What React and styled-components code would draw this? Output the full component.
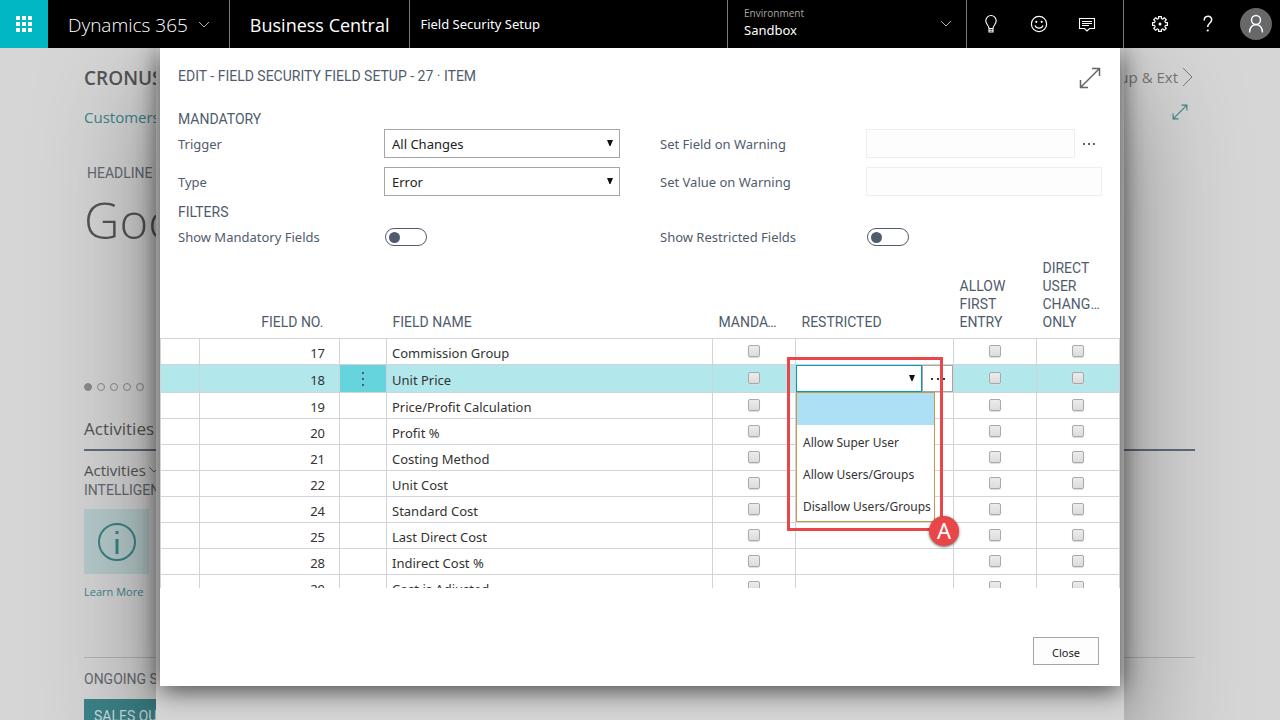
import { useState } from 'react'
import styled, { createGlobalStyle } from 'styled-components'

const GlobalStyle = createGlobalStyle`
    * {
        box-sizing: border-box;
    }
    body {
        margin: 0;
        background-color: #d6d6d6;
        font-family: 'Noto Sans', 'Open Sans', sans-serif;
        font-size: 13px;
        color: #333333;
        overflow: hidden;
    }
    button, select, input {
        font-family: inherit;
        margin: 0;
    }
`

const ui = {
    slate: '#505c6d',
    teal: '#00b7c3',
    line: '#d1d3da',
    border: '#a6a6a6',
    red: '#e94649',
}

/* top bar */

const TopBar = styled.header`
    display: flex;
    height: 48px;
    background-color: #000000;
    color: #ffffff;
`

const Waffle = styled.button`
    width: 48px;
    padding: 0;
    border: 0;
    background-color: ${ui.teal};
    display: flex;
    align-items: center;
    justify-content: center;
`

const Product = styled.button`
    display: flex;
    align-items: center;
    gap: 11px;
    padding: 2px 20px 0;
    border: 0;
    border-right: 1px solid #7a7a7a;
    background: none;
    color: #ffffff;
    font-family: 'Open Sans', sans-serif;
    font-size: ${props => props.$light ? 19 : 18}px;
    line-height: 26px;
    font-weight: ${props => props.$light ? 300 : 400};
    white-space: nowrap;
`

const PageName = styled.div`
    flex: 1;
    min-width: 0;
    padding: 0 10px;
    line-height: 48px;
`

const Environment = styled.button`
    width: 239px;
    padding: 0 15px 0 16px;
    border: 0;
    border-left: 1px solid #7a7a7a;
    background: none;
    color: #ffffff;
    display: flex;
    align-items: center;
    justify-content: space-between;
    text-align: left;
    font-size: 13px;
    line-height: 17px;
`

const EnvironmentText = styled.span`
    padding-bottom: 4px;
`

const EnvironmentLabel = styled.small`
    display: block;
    font-family: 'Open Sans', sans-serif;
    font-size: 10px;
    color: #a8a8a8;
`

const BarIcons = styled.nav`
    display: flex;
    border-left: 1px solid #7a7a7a;
    padding: ${props => props.$last ? '0 0 0 12px' : '0 12px 0 0'};
`

const BarButton = styled.button`
    width: 48px;
    padding: 0;
    border: 0;
    background: none;
    color: #ffffff;
    display: flex;
    align-items: center;
    justify-content: center;
`

/* role center behind the dialog */

const RoleCenter = styled.main`
    padding: 16px 85px 0 84px;
    color: #555555;
    font-family: 'Open Sans', sans-serif;
    height: calc(100vh - 48px);
    overflow: hidden;
`

const CenterTop = styled.div`
    display: flex;
    align-items: center;
    justify-content: space-between;
    height: 28px;
`

const Company = styled.h1`
    margin: 0;
    font-size: 19px;
    line-height: 28px;
    font-weight: 600;
`

const NavLink = styled.a`
    display: flex;
    align-items: center;
    gap: 4px;
    padding: 0 1px 2px 0;
    font-size: 15px;
    color: #777777;
    text-decoration: none;
`

const CenterLinks = styled.div`
    display: flex;
    justify-content: space-between;
    align-items: flex-start;
    height: 26px;
    margin-top: 12px;
    padding-right: 7px;
`

const TealLink = styled.a`
    display: block;
    color: #3c8488;
    text-decoration: none;
    font-size: ${props => props.$small ? 11 : 15}px;
    line-height: ${props => props.$small ? 20 : 26}px;
`

const Caption = styled.h3`
    margin: 0;
    font-family: Roboto, sans-serif;
    font-weight: 400;
    font-size: 14px;
    line-height: 18px;
    color: #646a73;
`

const Headline = styled.section`
    height: 253px;
    padding-top: 34px;
`

const HeadlineCaption = styled(Caption)`
    padding-left: 3px;
`

const Greeting = styled.p`
    margin: 6px 0 0;
    font-size: 49px;
    line-height: 64px;
    font-weight: 300;
`

const Dots = styled.div`
    display: flex;
    gap: 5px;
`

const Dot = styled.span`
    width: 8px;
    height: 8px;
    border-radius: 50%;
    border: 1px solid #8c8c8c;
    background-color: ${props => props.$on ? '#8c8c8c' : 'transparent'};
`

const SectionTitle = styled.h2`
    margin: 24px 0 8px;
    padding-bottom: 6px;
    border-bottom: 2px solid #636c78;
    font-size: 17px;
    line-height: 28px;
    font-weight: 400;
`

const SubTitle = styled.p`
    display: flex;
    align-items: center;
    gap: 3px;
    margin: 0;
    font-size: 15px;
    line-height: 22px;
`

const InfoTile = styled.div`
    width: 65px;
    height: 65px;
    margin: 10px 0 8px;
    background-color: #b8cccd;
    display: flex;
    align-items: center;
    justify-content: center;
`

const Ongoing = styled.section`
    margin-top: 55px;
    padding-top: 12px;
    border-top: 1px solid #b4b4b4;
`

const SalesTile = styled.div`
    width: 140px;
    height: 120px;
    margin-top: 11px;
    padding: 8px 10px;
    background-color: #3c8488;
    font-family: Roboto, sans-serif;
    font-size: 14px;
    line-height: 18px;
    color: #d0dfe0;
`

/* stacked sheets, these lie over the role center */

const Sheet = styled.div`
    position: absolute;
    top: 48px;
    bottom: 0;
    left: 156px;
    right: 156px;
    background-color: #d5d5d5;
    box-shadow: 0 40px 110px rgba(0, 0, 0, 0.4);
    clip-path: inset(0 -156px 0 -156px);
`

const Dialog = styled.section`
    position: absolute;
    top: 0;
    left: 4px;
    right: 4px;
    background-color: #ffffff;
    box-shadow: 0 4px 25px rgba(0, 0, 0, 0.7);
`

const DialogHead = styled.header`
    display: flex;
    justify-content: space-between;
    align-items: flex-start;
    padding: 19px 19px 0 18px;
    height: 62px;
`

const DialogTitle = styled.h2`
    margin: 0;
    font-family: Roboto, sans-serif;
    font-size: 14px;
    line-height: 18px;
    font-weight: 400;
    color: ${ui.slate};
`

const IconButton = styled.button`
    padding: 0;
    border: 0;
    background: none;
    color: #666666;
    display: flex;
`

const GroupTitle = styled(DialogTitle)`
    padding: 0 18px;
`

const Fields = styled.div`
    display: grid;
    grid-template-columns: repeat(2, minmax(0, 1fr));
    column-gap: 40px;
    row-gap: 9px;
    padding: ${props => props.$flat ? '6px 18px 12px' : '1px 18px 7px'};
`

const Field = styled.div`
    display: flex;
    align-items: center;
    height: ${props => props.$flat ? 20 : 29}px;
`

const FieldLabel = styled.label`
    width: 206px;
    flex: none;
    font-size: 13px;
    line-height: 18px;
    color: ${ui.slate};
`

const SelectBox = styled.div`
    flex: 1;
    min-width: 0;
    display: grid;
    align-items: center;

    > * {
        grid-area: 1 / 1;
    }
    > svg {
        justify-self: end;
        margin: 0 7px 2px 0;
        pointer-events: none;
    }
`

const Select = styled.select`
    appearance: none;
    width: 100%;
    height: ${props => props.$active ? 27 : 29}px;
    padding: 0 7px;
    border: 1px solid ${props => props.$active ? '#00a0ab' : ui.border};
    border-radius: 0;
    background-color: #ffffff;
    color: #212121;
    font-size: 13px;
    outline: 0;
`

const TextInput = styled.input`
    flex: 1;
    min-width: 0;
    height: 29px;
    border: 1px solid #eeeeee;
    background-color: #fdfdfd;
    padding: 0 8px;
`

const MoreButton = styled(IconButton)`
    width: 27px;
    height: 29px;
    align-items: center;
    justify-content: center;
    color: #666666;
`

const Toggle = styled.input`
    appearance: none;
    width: 42px;
    height: 18px;
    margin-left: 1px;
    border: 1px solid ${ui.slate};
    border-radius: 9px;
    display: flex;
    align-items: center;
    padding: 0 3px;

    &::before {
        content: '';
        width: 11px;
        height: 11px;
        border-radius: 50%;
        background-color: ${ui.slate};
    }
    &:checked {
        justify-content: flex-end;
    }
`

/* field list */

const ListArea = styled.div`
    height: 329px;
    overflow: hidden;
`

const Table = styled.table`
    width: 100%;
    table-layout: fixed;
    border-collapse: collapse;
`

const Th = styled.th`
    padding: 0 ${props => props.$right ? 16 : 17}px 7px 6px;
    vertical-align: bottom;
    text-align: ${props => props.$right ? 'right' : 'left'};
    font-family: Roboto, sans-serif;
    font-size: 14px;
    line-height: 18px;
    font-weight: 400;
    color: ${ui.slate};
    overflow: hidden;
    text-overflow: ellipsis;
`

const Row = styled.tr`
    height: ${props => props.$selected ? 28 : 26}px;
    background-color: ${props => props.$selected ? '#b2e8ec' : '#ffffff'};
`

const Td = styled.td`
    padding: ${props => props.$editor ? '0' : '3px 5px 0'};
    border: 1px solid ${ui.line};
    text-align: ${props => props.$align || 'left'};
    line-height: 20px;
    white-space: nowrap;
`

const NumberTd = styled(Td)`
    padding-right: 14px;
`

const MenuTd = styled(Td)`
    padding: 0;
    background-color: ${props => props.$on ? '#66d4dd' : 'transparent'};
`

const RowMenu = styled(IconButton)`
    width: 100%;
    height: 27px;
    align-items: center;
    justify-content: center;
    color: ${ui.slate};
`

const Check = styled.input`
    appearance: none;
    display: block;
    width: 12px;
    height: 12px;
    margin: 0 auto 5px;
    border: 1px solid #a9a9a9;
    border-radius: 2px;
    background: linear-gradient(#ececec, #dcdcdc);
    box-shadow: 0 1px 1px #dddddd;
`

const Editor = styled.div`
    position: relative;
    display: flex;
    height: 27px;
`

const Assist = styled.button`
    width: 31px;
    padding: 0;
    border: 1px solid ${ui.border};
    background-color: #ffffff;
    color: #333333;
    display: flex;
    align-items: center;
    justify-content: center;
`

const Options = styled.ul`
    position: absolute;
    z-index: 1;
    top: 27px;
    left: 0;
    width: 139px;
    margin: 0;
    padding: 0;
    list-style: none;
    border: 1px solid #c19c4a;
    background-color: #ffffff;
`

const Option = styled.li`
    height: 32px;
    padding: 2px 6px 0;
    font-size: 12px;
    line-height: 32px;
    color: #333333;
    background-color: ${props => props.$on ? '#addff5' : '#ffffff'};
`

const Marker = styled.div`
    position: absolute;
    z-index: 2;
    top: -8px;
    left: -9px;
    width: 156px;
    height: 174px;
    border: 3px solid ${ui.red};
    pointer-events: none;
`

const MarkerBadge = styled.span`
    position: absolute;
    right: -19px;
    bottom: -18px;
    width: 30px;
    height: 30px;
    border-radius: 50%;
    background-color: ${ui.red};
    box-shadow: 0 1px 3px rgba(0, 0, 0, 0.6);
    color: #ffffff;
    font-size: 22px;
    line-height: 29px;
    text-align: center;
`

const DialogFoot = styled.footer`
    display: flex;
    justify-content: flex-end;
    padding: 49px 21px 21px;
`

const CloseButton = styled.button`
    width: 66px;
    height: 28px;
    padding: 2px 0 0;
    border: 1px solid ${ui.border};
    background-color: #fdfdfd;
    font-size: 11px;
    color: #212121;
`

/* icons */

const Chevron = ({ color = '#b5b5b5' }) => (
    <svg width="10" height="10" viewBox="0 0 10 10" fill="none" stroke={color}>
        <path d="M0 2l5 5 5-5" />
    </svg>
)

const Triangle = () => (
    <svg width="6" height="6" viewBox="0 0 6 6" fill="#111111">
        <path d="M0 0h6L3.500 6h-1z" />
    </svg>
)

const Expand = ({ size, color = 'currentColor' }) => (
    <svg width={size} height={size} viewBox="0 0 22 22" fill="none" stroke={color} strokeWidth="1.5">
        <path d="M1.5 20.5l19-19M13 1.500h7.500V9M1.500 13v7.500H9" />
    </svg>
)

const MoreDots = ({ step = 5 }) => (
    <svg width={step * 2 + 2} height="2" fill="currentColor">
        {[0, 1, 2].map(i => <rect key={i} x={i * step} width="2" height="2" />)}
    </svg>
)

const MenuDots = () => (
    <svg width="2" height="14" fill="currentColor">
        {[0, 6, 12].map(y => <rect key={y} y={y} width="2" height="2" />)}
    </svg>
)

const WaffleIcon = () => (
    <svg width="16" height="16" viewBox="0 0 16 16" fill="#ffffff">
        {[0, 6, 12].map(y => [0, 6, 12].map(x => (
            <rect key={`${x}-${y}`} x={x} y={y} width="4" height="4" />
        )))}
    </svg>
)

const BulbIcon = () => (
    <svg width="20" height="20" viewBox="0 0 20 20" fill="none" stroke="#ffffff" strokeWidth="1.100">
        <path d="M8 14.500c0-3-3.200-4.200-3.200-7.800a5.200 5.200 0 0 1 10.400 0c0 3.600-3.200 4.800-3.200 7.800zM8 14.500v3.500h4v-3.500M8 16.300h4" />
    </svg>
)

const SmileIcon = () => (
    <svg width="18" height="18" viewBox="0 0 18 18" fill="none" stroke="#ffffff" strokeWidth="1.200">
        <circle cx="9" cy="9" r="7.600" />
        <path d="M5 10.500c1.300 3.500 6.700 3.500 8 0" />
        <circle cx="6.300" cy="6.800" r="1.100" fill="#ffffff" stroke="none" />
        <circle cx="11.700" cy="6.800" r="1.100" fill="#ffffff" stroke="none" />
    </svg>
)

const ChatIcon = () => (
    <svg width="18" height="18" viewBox="0 0 18 18" fill="none" stroke="#ffffff" strokeWidth="1.100">
        <path d="M1.500 3.500h15v10h-5L9 16l-2.500-2.500h-5zM4 6.500h10M4 8.500h10M4 10.500h7" />
    </svg>
)

// eight teeth, four points each
const gearPoints = Array.from({ length: 32 }, (_, i) => {
    const tooth = Math.floor(i / 4)
    const [turn, radius] = [[-14, 5.6], [-11, 7.6], [11, 7.6], [14, 5.6]][i % 4]
    const angle = (tooth * 45 + turn) * Math.PI / 180
    return `${9 + radius * Math.cos(angle)},${9 + radius * Math.sin(angle)}`
}).join(' ')

const GearIcon = () => (
    <svg width="18" height="18" viewBox="0 0 18 18" fill="none" stroke="#ffffff" strokeWidth="1.200">
        <polygon points={gearPoints} strokeLinejoin="round" />
        <circle cx="9" cy="9" r="1.500" fill="#ffffff" stroke="none" />
    </svg>
)

const HelpIcon = () => (
    <svg width="18" height="18" viewBox="0 0 18 18" fill="none" stroke="#ffffff" strokeWidth="1.500">
        <path d="M5.200 5.500C5.200 0 12.700 0 12.700 4.800c0 3.200-4 3.400-4 7.200" />
        <circle cx="8.700" cy="15.500" r="1.100" fill="#ffffff" stroke="none" />
    </svg>
)

const PersonIcon = () => (
    <svg width="32" height="32" viewBox="0 0 32 32" fill="none" stroke="#ffffff" strokeWidth="1.400">
        <circle cx="16" cy="16" r="16" fill="#67686a" stroke="none" />
        <circle cx="16" cy="12" r="4.500" />
        <path d="M9.500 24.500c0-10.500 13-10.500 13 0" />
    </svg>
)

const InfoIcon = () => (
    <svg width="38" height="38" viewBox="0 0 38 38" fill="none" stroke="#3c8488" strokeWidth="2">
        <circle cx="19" cy="19" r="18" />
        <path d="M19 16v15M19 8v3" strokeWidth="3" />
    </svg>
)

const rows = [
    [17, 'Commission Group'],
    [18, 'Unit Price'],
    [19, 'Price/Profit Calculation'],
    [20, 'Profit %'],
    [21, 'Costing Method'],
    [22, 'Unit Cost'],
    [24, 'Standard Cost'],
    [25, 'Last Direct Cost'],
    [28, 'Indirect Cost %'],
    [29, 'Cost is Adjusted'],
]

const options = ['', 'Allow Super User', 'Allow Users/Groups', 'Disallow Users/Groups']

function RestrictedEditor() {
    const [value, setValue] = useState('')
    return (
        <Editor>
            <SelectBox>
                <Select
                    $active
                    aria-label="Restricted"
                    value={value}
                    onChange={e => setValue(e.target.value)}
                >
                    {options.map(option => <option key={option}>{option}</option>)}
                </Select>
                <Triangle />
            </SelectBox>
            <Assist aria-label="Choose groups"><MoreDots step={6} /></Assist>
            <Options>
                {options.map(option => (
                    <Option key={option} $on={option === value} onClick={() => setValue(option)}>
                        {option}
                    </Option>
                ))}
            </Options>
            <Marker><MarkerBadge>A</MarkerBadge></Marker>
        </Editor>
    )
}

function FieldRow({ no, name, selected }) {
    return (
        <Row $selected={selected}>
            <Td />
            <NumberTd $align="right">{no}</NumberTd>
            <MenuTd $on={selected}>
                {selected && <RowMenu aria-label="Row menu"><MenuDots /></RowMenu>}
            </MenuTd>
            <Td>{name}</Td>
            <Td><Check type="checkbox" aria-label={`Mandatory ${no}`} /></Td>
            <Td $editor={selected}>{selected && <RestrictedEditor />}</Td>
            <Td><Check type="checkbox" aria-label={`Allow first entry ${no}`} /></Td>
            <Td><Check type="checkbox" aria-label={`Direct user change only ${no}`} /></Td>
        </Row>
    )
}

function FieldList() {
    return (
        <ListArea>
            <Table>
                <colgroup>
                    <col width="39" />
                    <col width="140" />
                    <col width="47" />
                    <col />
                    <col width="83" />
                    <col width="158" />
                    <col width="83" />
                    <col width="83" />
                </colgroup>
                <thead>
                    <tr>
                        <Th />
                        <Th $right>FIELD NO.</Th>
                        <Th />
                        <Th>FIELD NAME</Th>
                        <Th>MANDATORY</Th>
                        <Th>RESTRICTED</Th>
                        <Th>ALLOW FIRST ENTRY</Th>
                        <Th>DIRECT USER CHANGES ONLY</Th>
                    </tr>
                </thead>
                <tbody>
                    {rows.map(([no, name]) => (
                        <FieldRow key={no} no={no} name={name} selected={no === 18} />
                    ))}
                </tbody>
            </Table>
        </ListArea>
    )
}

function SetupDialog() {
    const [trigger, setTrigger] = useState('All Changes')
    const [type, setType] = useState('Error')
    return (
        <Dialog>
            <DialogHead>
                <DialogTitle>EDIT - FIELD SECURITY FIELD SETUP - 27 · ITEM</DialogTitle>
                <IconButton aria-label="Expand"><Expand size={22} /></IconButton>
            </DialogHead>
            <GroupTitle>MANDATORY</GroupTitle>
            <Fields>
                <Field>
                    <FieldLabel htmlFor="trigger">Trigger</FieldLabel>
                    <SelectBox>
                        <Select id="trigger" value={trigger} onChange={e => setTrigger(e.target.value)}>
                            <option>All Changes</option>
                        </Select>
                        <Triangle />
                    </SelectBox>
                </Field>
                <Field>
                    <FieldLabel htmlFor="warn-field">Set Field on Warning</FieldLabel>
                    <TextInput id="warn-field" disabled />
                    <MoreButton aria-label="Choose field"><MoreDots /></MoreButton>
                </Field>
                <Field>
                    <FieldLabel htmlFor="type">Type</FieldLabel>
                    <SelectBox>
                        <Select id="type" value={type} onChange={e => setType(e.target.value)}>
                            <option>Error</option>
                        </Select>
                        <Triangle />
                    </SelectBox>
                </Field>
                <Field>
                    <FieldLabel htmlFor="warn-value">Set Value on Warning</FieldLabel>
                    <TextInput id="warn-value" disabled />
                </Field>
            </Fields>
            <GroupTitle>FILTERS</GroupTitle>
            <Fields $flat>
                <Field $flat>
                    <FieldLabel htmlFor="show-mandatory">Show Mandatory Fields</FieldLabel>
                    <Toggle id="show-mandatory" type="checkbox" />
                </Field>
                <Field $flat>
                    <FieldLabel htmlFor="show-restricted">Show Restricted Fields</FieldLabel>
                    <Toggle id="show-restricted" type="checkbox" />
                </Field>
            </Fields>
            <FieldList />
            <DialogFoot>
                <CloseButton>Close</CloseButton>
            </DialogFoot>
        </Dialog>
    )
}

function App() {
    return (
        <>
            <GlobalStyle />
            <TopBar>
                <Waffle aria-label="Apps"><WaffleIcon /></Waffle>
                <Product $light>Dynamics 365 <Chevron /></Product>
                <Product>Business Central</Product>
                <PageName>Field Security Setup</PageName>
                <Environment>
                    <EnvironmentText>
                        <EnvironmentLabel>Environment</EnvironmentLabel>
                        Sandbox
                    </EnvironmentText>
                    <Chevron />
                </Environment>
                <BarIcons>
                    <BarButton aria-label="Tips"><BulbIcon /></BarButton>
                    <BarButton aria-label="Feedback"><SmileIcon /></BarButton>
                    <BarButton aria-label="Messages"><ChatIcon /></BarButton>
                </BarIcons>
                <BarIcons $last>
                    <BarButton aria-label="Settings"><GearIcon /></BarButton>
                    <BarButton aria-label="Help"><HelpIcon /></BarButton>
                    <BarButton aria-label="Account"><PersonIcon /></BarButton>
                </BarIcons>
            </TopBar>
            <RoleCenter>
                <CenterTop>
                    <Company>CRONUS</Company>
                    <NavLink href="#setup">
                        Setup &amp; Ext
                        <svg width="12" height="20" viewBox="0 0 12 20" fill="none" stroke="#6a7f82">
                            <path d="M1 1l9 9-9 9" />
                        </svg>
                    </NavLink>
                </CenterTop>
                <CenterLinks>
                    <TealLink href="#customers">Customers</TealLink>
                    <Expand size={16} color="#3c8488" />
                </CenterLinks>
                <Headline>
                    <HeadlineCaption>HEADLINE</HeadlineCaption>
                    <Greeting>Good</Greeting>
                </Headline>
                <Dots>
                    {[0, 1, 2, 3, 4].map(i => <Dot key={i} $on={i === 0} />)}
                </Dots>
                <SectionTitle>Activities</SectionTitle>
                <SubTitle>Activities <Chevron color="#666666" /></SubTitle>
                <Caption>INTELLIGENT</Caption>
                <InfoTile><InfoIcon /></InfoTile>
                <TealLink $small href="#learn">Learn More</TealLink>
                <Ongoing>
                    <Caption>ONGOING SALES</Caption>
                    <SalesTile>SALES QUOTES</SalesTile>
                </Ongoing>
            </RoleCenter>
            <Sheet>
                <SetupDialog />
            </Sheet>
        </>
    )
}

export default App
